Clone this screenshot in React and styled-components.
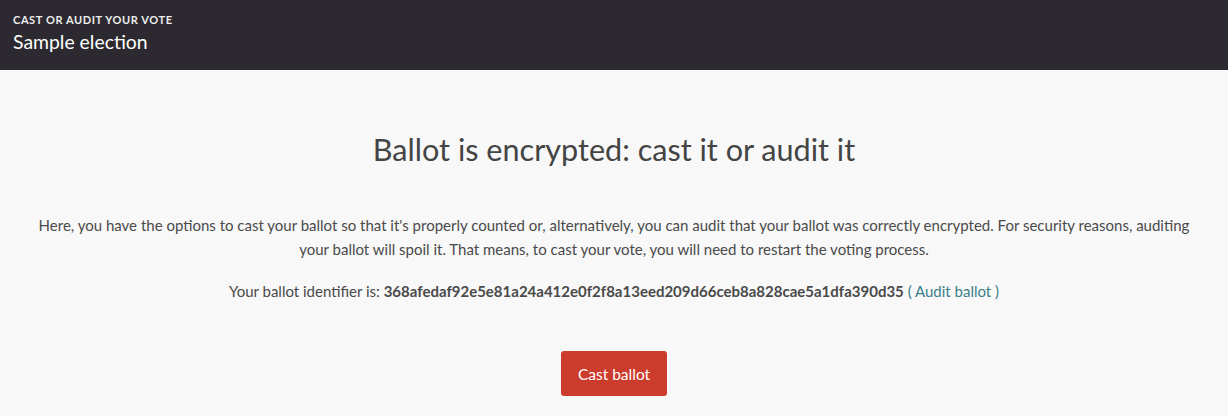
import styled, { createGlobalStyle } from "styled-components";

const GlobalStyle = createGlobalStyle`
  html, body {
    margin: 0;
    padding: 0;
    background: #f8f8f8;
  }
  body {
    font-family: "Source Sans Pro", Lato, "Liberation Sans", sans-serif;
    color: #4a4a4a;
  }
`;

function App() {
  return (
    <>
      <GlobalStyle />
      <Header>
        <Eyebrow>Cast or audit your vote</Eyebrow>
        <ElectionName>Sample election</ElectionName>
      </Header>
      <Main>
        <Title>Ballot is encrypted: cast it or audit it</Title>
        <Paragraph>
          Here, you have the options to cast your ballot so that it's properly
          counted or, alternatively, you can audit that your ballot was
          correctly encrypted. For security reasons, auditing your ballot will
          spoil it. That means, to cast your vote, you will need to restart the
          voting process.
        </Paragraph>
        <Identifier>
          Your ballot identifier is:{" "}
          <Hash>
            368afedaf92e5e81a24a412e0f2f8a13eed209d66ceb8a828cae5a1dfa390d35
          </Hash>
          <AuditLink href="#"> ( Audit ballot )</AuditLink>
        </Identifier>
        <Actions>
          <CastButton>Cast ballot</CastButton>
        </Actions>
      </Main>
    </>
  );
}

export default App;

const Header = styled.header`
  background: #2c2a30;
  color: #fff;
  height: 70px;
  box-sizing: border-box;
  padding: 13px 13px 0;
  display: flex;
  flex-direction: column;
`;

const Eyebrow = styled.div`
  font-size: 11px;
  font-weight: 700;
  text-transform: uppercase;
  letter-spacing: 0.6px;
  line-height: 14px;
  color: #eeeeee;
`;

const ElectionName = styled.div`
  font-size: 19.4px;
  line-height: 28px;
  margin-top: 1px;
`;

const Main = styled.main`
  padding: 60px 24px 0;
  text-align: center;
`;

const Title = styled.h1`
  font-size: 30.6px;
  font-weight: 400;
  line-height: 40px;
  margin: 0 0 43px;
  color: #444;
`;

const Paragraph = styled.p`
  font-size: 15px;
  line-height: 24px;
  margin: 0 0 18px;
`;

const Identifier = styled.p`
  font-size: 15px;
  line-height: 24px;
  margin: 0;
`;

const Hash = styled.strong`
  font-weight: 700;
`;

const AuditLink = styled.a`
  color: #3a7e88;
  text-decoration: none;
`;

const Actions = styled.div`
  display: flex;
  justify-content: center;
  margin-top: 48px;
`;

const CastButton = styled.button`
  background: #cc3c2d;
  color: #fff;
  border: none;
  border-radius: 3px;
  font-family: inherit;
  font-size: 15.5px;
  width: 106px;
  height: 45px;
  cursor: pointer;
`;
